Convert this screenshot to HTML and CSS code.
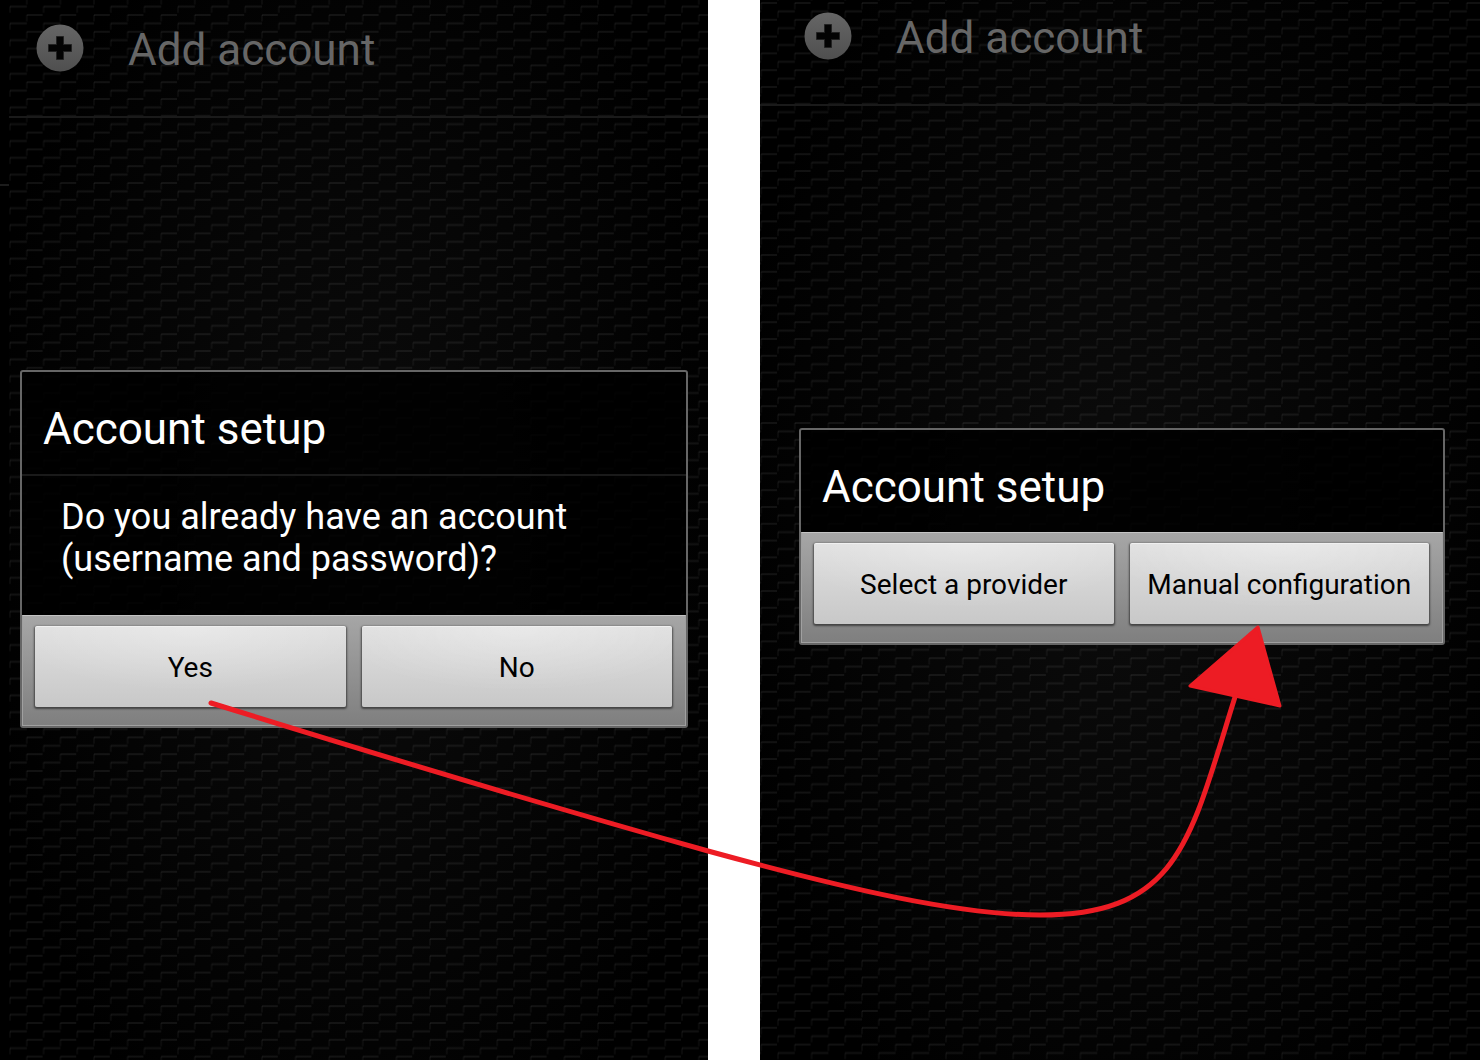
FILE: index.html
```html
<!DOCTYPE html>
<html lang="en">
<head>
<meta charset="utf-8">
<title>Account setup</title>
<link rel="stylesheet" href="styles.css">
</head>
<body>
<main class="board">
  <div class="sliver" aria-hidden="true"></div>

  <section class="phone phone-first">
    <header class="bar">
      <svg class="plus" viewBox="0 0 48 48" aria-hidden="true">
        <defs><linearGradient id="disc" x1="0" y1="0" x2="0" y2="1"><stop offset="0" stop-color="#666"/><stop offset="1" stop-color="#4f4f4f"/></linearGradient></defs>
        <circle cx="24" cy="24" r="23.5" fill="url(#disc)"/>
        <path d="M20.500 12.500h7v8h8v7h-8v8h-7v-8h-8v-7h8z" fill="#030303" stroke="#222" stroke-width="1" stroke-linejoin="round"/>
      </svg>
      <span class="bar-label">Add account</span>
    </header>
    <div class="dialog" role="dialog" aria-labelledby="title-first">
      <h2 class="title" id="title-first">Account setup</h2>
      <p class="message">Do you already have an account (username and password)?</p>
      <div class="actions">
        <button type="button">Yes</button>
        <button type="button">No</button>
      </div>
    </div>
  </section>

  <section class="phone phone-second">
    <header class="bar">
      <svg class="plus" viewBox="0 0 48 48" aria-hidden="true">
        <circle cx="24" cy="24" r="23.5" fill="url(#disc)"/>
        <path d="M20.500 12.500h7v8h8v7h-8v8h-7v-8h-8v-7h8z" fill="#030303" stroke="#222" stroke-width="1" stroke-linejoin="round"/>
      </svg>
      <span class="bar-label">Add account</span>
    </header>
    <div class="dialog" role="dialog" aria-labelledby="title-second">
      <h2 class="title" id="title-second">Account setup</h2>
      <div class="actions">
        <button type="button">Select a provider</button>
        <button type="button">Manual configuration</button>
      </div>
    </div>
  </section>

  <svg class="arrow" viewBox="0 0 1480 1060" aria-hidden="true">
    <path d="M211 703C420 768 580 815 708 851C850 890 960 915 1040 915C1180 915 1190 840 1235 697" fill="none" stroke="#ed1c24" stroke-width="5" stroke-linecap="round"/>
    <path d="M1258 627L1190 686L1280 706Z" fill="#ed1c24" stroke="#ed1c24" stroke-width="3" stroke-linejoin="round"/>
  </svg>
</main>
</body>
</html>
```
FILE: styles.css
```css
* {
  box-sizing: border-box;
}

body {
  margin: 0;
  background: #fff;
  font-family: Roboto, "Liberation Sans", sans-serif;
}

.board {
  position: relative;
  display: grid;
  grid-template-columns: 9px 699fr 52px 720fr;
  min-height: 100vh;
}

.sliver {
  background: linear-gradient(#1c1c1c, #1c1c1c) 0 184px / 9px 2px no-repeat #000;
}

/* Stepped carbon weave over a faint glow */
.phone {
  display: flex;
  flex-direction: column;
  background-color: #000;
  background-image:
    url("data:image/svg+xml,%3Csvg xmlns='http://www.w3.org/2000/svg' width='168' height='84'%3E%3Cdefs%3E%3Cpattern id='p' width='33.6' height='16.8' patternUnits='userSpaceOnUse'%3E%3Cg fill='none' stroke='%23fff' stroke-width='1.800'%3E%3Cpath d='M1 9.400H17.800M17.800 1H33.600' stroke-opacity='.065'/%3E%3Cpath d='M1 15.500V9.400M17.800 7.500V1' stroke-opacity='.04'/%3E%3C/g%3E%3C/pattern%3E%3C/defs%3E%3Crect width='168' height='84' fill='url(%23p)'/%3E%3C/svg%3E"),
    radial-gradient(ellipse 55% 65% at 50% 50%, #0c0c0c, #000);
}

.phone-first {
  background-position: 0 14px, 0 0;
}

.phone-second {
  grid-column: 4;
  background-position: 17px 2px, 0 0;
}

.bar {
  display: flex;
  align-items: center;
  gap: 44px;
  height: 118px;
  padding: 0 0 20px 27px;
  border-bottom: 2px solid #1a1a1a;
  color: #666;
  font-size: 44px;
  line-height: 52px;
}

.phone-second .bar {
  height: 106px;
  padding: 0 0 32px 44px;
}

.bar-label {
  padding-top: 4px;
}

.plus {
  width: 48px;
  height: 48px;
}

.dialog {
  border: 2px solid #666;
  border-radius: 3px;
  background: rgb(0 0 0 / 85%);
  color: #fff;
}

.phone-first .dialog {
  margin: 252px 20px 0 11px;
}

.phone-second .dialog {
  margin: 322px 35px 0 39px;
}

.title {
  margin: 0;
  padding: 31px 21px 19px;
  font-size: 44px;
  font-weight: 400;
  line-height: 52px;
}

.message {
  margin: 0;
  padding: 20px 39px 35px;
  border-top: 2px solid #1a1a1a;
  font-size: 36px;
  line-height: 42px;
}

.actions {
  display: grid;
  grid-template-columns: 1fr 1fr;
  gap: 16px;
  padding: 10px 13px 18px 12px;
  border: 1px solid #a0a0a0;
  border-top-color: #c4c4c4;
  background: linear-gradient(#a6a6a6, #7f7f7f);
}

button {
  height: 81px;
  padding: 2px 0 0;
  border: 0;
  border-radius: 2px;
  background: radial-gradient(ellipse 60% 80% at 50% 0, rgb(255 255 255 / 30%), transparent), linear-gradient(#e0e0e0, #c8c8c8);
  box-shadow: 0 1px 2px 1px rgb(0 0 0 / 50%), inset 0 1px #f0f0f0;
  color: #000;
  font: 400 28px/32px Roboto, "Liberation Sans", sans-serif;
}

.arrow {
  position: absolute;
  top: 0;
  left: 0;
  width: 100%;
  pointer-events: none;
}
```
